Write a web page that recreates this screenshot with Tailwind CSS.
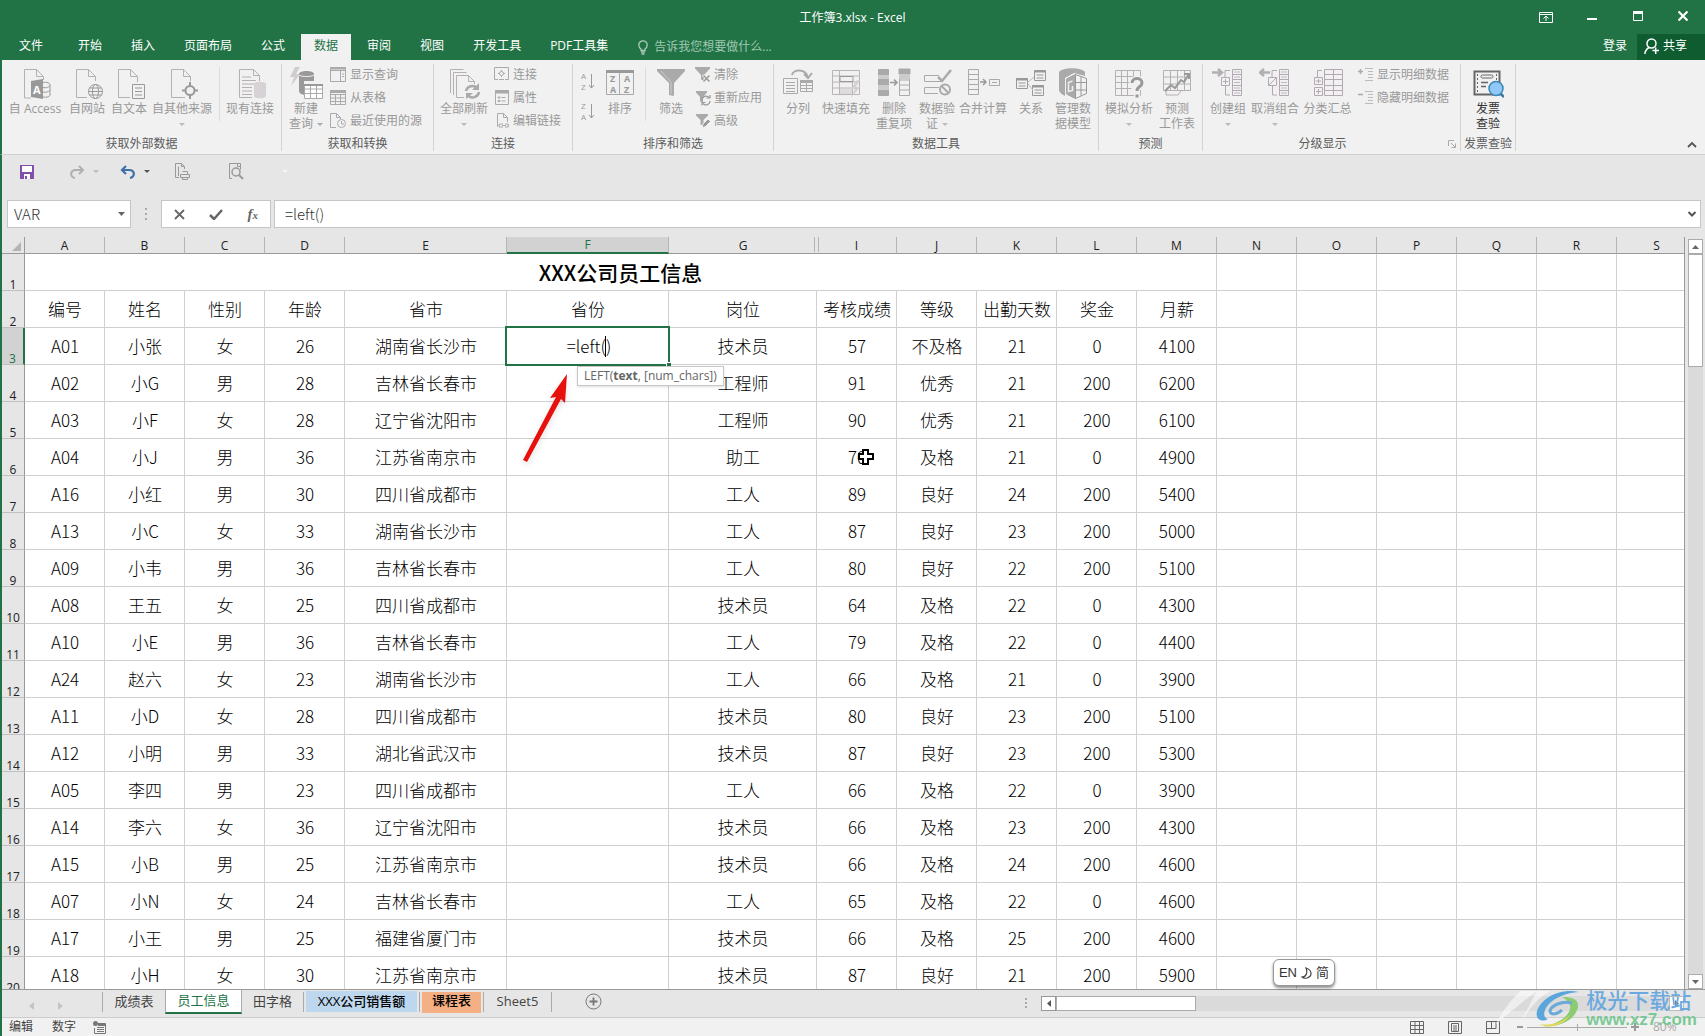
<!DOCTYPE html>
<html lang="zh-CN">
<head>
<meta charset="utf-8">
<title>工作簿3.xlsx - Excel</title>
<script src="https://cdn.jsdelivr.net/npm/@tailwindcss/browser@4"></script>
</head>
<body class="h-screen overflow-hidden bg-[#e6e6e6] font-['Open_Sans','Noto_Sans_CJK_SC',sans-serif] text-xs text-[#444]">
<div class="flex h-full flex-col">

<header class="shrink-0 bg-[#217346] text-white">
  <div class="grid h-[34px] grid-cols-[1fr_auto_1fr] items-center">
    <span></span>
    <h1 class="pt-[2px] text-xs">工作簿3.xlsx - Excel</h1>
    <div class="flex justify-end">
      <button class="flex w-[46px] justify-center" aria-label="功能区显示选项"><svg width="14" height="12" viewBox="0 0 14 12" fill="none" stroke="#fff"><path d="M.5 1.5h13v10H.5zM.5 3.5h13M7 10V5.500M4.500 7.500L7 5l2.500 2.500" /></svg></button>
      <button class="flex w-[46px] items-center justify-center" aria-label="最小化"><svg width="10" height="10"><path d="M0 7h10" stroke="#fff" stroke-width="2"/></svg></button>
      <button class="flex w-[46px] justify-center" aria-label="最大化"><svg width="10" height="10" fill="none" stroke="#fff"><path d="M.5.5h9v9h-9z"/><path d="M0 1.500h10" stroke-width="3"/></svg></button>
      <button class="flex w-[44px] justify-center" aria-label="关闭"><svg width="10" height="10"><path d="M.5.5l9 9M9.500.5l-9 9" stroke="#fff" stroke-width="2.200"/></svg></button>
    </div>
  </div>
  <div class="flex h-[26px] items-stretch justify-between">
    <nav class="flex gap-[3px] pl-[6px]">
      <button class="mr-[6px] px-[13px] pb-[2px]">文件</button>
      <button class="px-[13px] pb-[2px]">开始</button>
      <button class="px-[13px] pb-[2px]">插入</button>
      <button class="px-[13px] pb-[2px]">页面布局</button>
      <button class="px-[13px] pb-[2px]">公式</button>
      <button class="bg-[#f1f1f1] px-[13px] pb-[2px] text-[#217346]">数据</button>
      <button class="px-[13px] pb-[2px]">审阅</button>
      <button class="px-[13px] pb-[2px]">视图</button>
      <button class="px-[13px] pb-[2px]">开发工具</button>
      <button class="px-[13px] pb-[2px]">PDF工具集</button>
      <label class="flex items-center gap-[6px] pl-[14px]">
        <svg width="10" height="15" viewBox="0 0 10 15" fill="none" stroke="#a9cdb9" stroke-width="1.300"><path d="M3 10.500V9C1.500 8 .8 6.500.8 5a4.200 4.200 0 0 1 8.400 0c0 1.500-.7 3-2.200 4v1.500zM3 12.200h4M3.500 14h3"/></svg>
        <input class="w-[140px] bg-transparent placeholder-[#a0c8b2] outline-none" placeholder="告诉我您想要做什么..." aria-label="告诉我您想要做什么">
      </label>
    </nav>
    <div class="flex">
      <button class="px-[10px] pb-[2px]">登录</button>
      <button class="flex w-[68px] items-center gap-1 bg-[#0e5c2f] pb-[2px] pl-[7px]"><svg width="15" height="17" viewBox="0 0 15 17" fill="none" stroke="#fff" stroke-width="1.500"><circle cx="7.500" cy="5.500" r="4.500"/><path d="M5 9.500C2.500 11 1.200 13 .8 16M8.500 12.500h6.500M11.700 9.500v6.500"/></svg>共享</button>
    </div>
  </div>
</header>

<section class="flex h-[95px] shrink-0 border-b border-l-2 border-b-[#cfcfcf] border-l-[#217346] bg-[#f1f1f1] pt-1 pb-[3px] leading-[15px] text-[#999]">
  <!-- 获取外部数据 -->
  <div class="flex w-[280px] shrink-0 flex-col border-r border-[#d2d2d2]">
    <div class="flex h-[72px] pt-[3px]">
      <button class="flex w-[66px] flex-col items-center gap-[2px] whitespace-nowrap"><svg width="32" height="32" viewBox="0 0 32 32" fill="none" stroke="#b4b0b4"><path d="M12 31H5.500V2.500h12l7 7V13M17.500 2.500v7h7"/><path d="M22 16c4-1.500 9-.5 9 1.500v10.500c0 2-5 3-9 1.500M22 20c4 1.500 8 .5 9-1.500M22 24.500c4 1.500 8 .5 9-1.500" stroke="#999"/><path d="M12 14l12-2v20l-12-2z" fill="#999" stroke="none"/><text x="14" y="26.500" font-size="11" font-weight="700" fill="#fff" stroke="none">A</text></svg>自 Access</button>
      <button class="flex w-[38px] flex-col items-center gap-[2px] whitespace-nowrap"><svg width="32" height="32" viewBox="0 0 32 32" fill="none" stroke="#b4b0b4"><path d="M16 30.500H5.500v-28h12l7 7V14M17.500 2.500v7h7"/><g stroke="#999"><circle cx="24.500" cy="24.500" r="7"/><ellipse cx="24.500" cy="24.500" rx="3" ry="7"/><path d="M17.500 24.500h14M18.500 21h12M18.500 28h12"/></g></svg>自网站</button>
      <button class="flex w-[46px] flex-col items-center gap-[2px] whitespace-nowrap"><svg width="32" height="32" viewBox="0 0 32 32" fill="none" stroke="#b4b0b4"><path d="M17 30.500H5.500v-28h12l7 7V15M17.500 2.500v7h7"/><path d="M19.500 17.500h12v14h-12zM22 21h7M22 24.500h7M22 28h7" stroke="#999"/></svg>自文本</button>
      <button class="flex w-[60px] flex-col items-center gap-[2px] whitespace-nowrap"><svg width="32" height="32" viewBox="0 0 32 32" fill="none" stroke="#b4b0b4"><path d="M19 30.500H5.500v-28h12l7 7V14M17.500 2.500v7h7"/><g stroke="#999" stroke-width="2"><circle cx="24" cy="23.500" r="4.500"/><path d="M24 15v4M24 28v4M16 23.500h4M28.500 23.500h3.500"/></g></svg>自其他来源<svg width="6" height="3" class="mt-[5px]"><path d="M0 0h6L3 3z" fill="#bbb"/></svg></button>
      <div class="ml-[7px] h-[54px] w-px shrink-0 bg-[#dcdcdc]"></div>
      <button class="flex w-[60px] flex-col items-center gap-[2px] whitespace-nowrap"><svg width="32" height="32" viewBox="0 0 32 32" fill="none" stroke="#b4b0b4"><path d="M18 30.500H5.500v-28h14l6 6V14M19.500 2.500v6h6M8 10h9M8 13.500h14M8 17h12M8 20.500h10M8 24h10M8 27.500h10"/><path d="M20 17c0-3 12-3 12 0v12c0 3-12 3-12 0z" fill="#d6d2d6" stroke="none"/></svg>现有连接</button>
    </div>
    <h2 class="text-center text-[#5c5c5c]">获取外部数据</h2>
  </div>
  <!-- 获取和转换 -->
  <div class="flex w-[152px] shrink-0 flex-col border-r border-[#d2d2d2]">
    <div class="flex h-[72px] pt-[3px]">
      <button class="flex w-[48px] flex-col items-center gap-[2px]"><svg width="34" height="32" viewBox="0 0 34 32"><path d="M6 0L1 10h4l-3 9L11 7H7l4-7z" fill="#d0ccd0"/><path d="M10 7c0-4 15-4 15 0v7H15v14c-3-1-5-2-5-4z" fill="#999"/><path d="M10 8c2 2 13 2 15 0" stroke="#f1f1f1" fill="none"/><path d="M15.500 17.500h18v14h-18zM15.500 22h18M15.500 26.500h18M21.500 17v14M27.500 17v14" fill="#fff" stroke="#aaa"/><path d="M15 18h19" stroke="#999" stroke-width="2"/></svg><span class="whitespace-nowrap">新建<br>查询<svg width="6" height="3" class="ml-1 inline-block"><path d="M0 0h6L3 3z" fill="#aaa"/></svg></span></button>
      <div class="flex flex-col">
        <button class="flex h-[23px] items-start gap-1 whitespace-nowrap"><svg width="16" height="15" fill="none" stroke="#aaa"><path d="M.5.5h15v14H.5zM.5 3.500h15M10.500 4v10M12 7h2M12 9.500h2"/><path d="M0 1.500h16" stroke-width="2"/></svg>显示查询</button>
        <button class="flex h-[23px] items-start gap-1 whitespace-nowrap"><svg width="16" height="15" fill="none" stroke="#aaa"><path d="M.5.5h15v14H.5zM.5 4.500h15M.5 8h15M.5 11.500h15M5.500 4v11M10.500 4v11"/><path d="M0 1.500h16" stroke-width="3"/></svg>从表格</button>
        <button class="flex h-[23px] items-start gap-1 whitespace-nowrap"><svg width="16" height="15" fill="none" stroke="#aaa"><path d="M6 14.500H.5V.5h6l4 4V6M6.500.5v4h4"/><circle cx="11.500" cy="10.500" r="4"/><path d="M11.500 8v3h2.500"/></svg>最近使用的源</button>
      </div>
    </div>
    <h2 class="text-center text-[#5c5c5c]">获取和转换</h2>
  </div>
  <!-- 连接 -->
  <div class="flex w-[139px] shrink-0 flex-col border-r border-[#d2d2d2]">
    <div class="flex h-[72px] pt-[3px]">
      <button class="flex w-[60px] flex-col items-center gap-[2px] whitespace-nowrap"><svg width="32" height="32" viewBox="0 0 32 32" fill="none" stroke="#b4b0b4"><path d="M2.500 26V2.500h13M5.500 28V5.500h13M16 30.500H8.500v-22h12l6 6V17M20.500 8.500v6h6"/><g stroke="#aaa" stroke-width="2.500"><path d="M18 24a6.500 6.500 0 0 1 11-3M31 25a6.500 6.500 0 0 1-11 3.500"/></g><path d="M31 16v7h-7zM18 32v-6h7z" fill="#aaa" stroke="none"/></svg>全部刷新<svg width="6" height="3" class="mt-[5px]"><path d="M0 0h6L3 3z" fill="#bbb"/></svg></button>
      <div class="flex flex-col">
        <button class="flex h-[23px] items-start gap-1 whitespace-nowrap"><svg width="15" height="15" fill="none" stroke="#aaa"><path d="M4 12.500H.5V.5h14v12H11M5 12.500h5"/><circle cx="7.500" cy="6.500" r="2"/><path d="M7.500 3v1.500M7.500 8.500V10M4 6.500h1.500M9.500 6.500H11"/></svg>连接</button>
        <button class="flex h-[23px] items-start gap-1 whitespace-nowrap"><svg width="15" height="16" fill="none" stroke="#aaa"><path d="M1.500.5h13v14h-13zM7.500 7.500h4M7.500 11h4M4 7h2v1H4zM4 10.500h2v1H4z"/><path d="M1 2h14" stroke-width="3"/></svg>属性</button>
        <button class="flex h-[23px] items-start gap-1 whitespace-nowrap"><svg width="15" height="15" fill="none" stroke="#aaa"><path d="M4 13.500H3.500V.5h6l4 4V9M9.500.5v4h4"/><path d="M9 11H6.500a1.500 1.500 0 0 0 0 3H9M11 11h2a1.500 1.500 0 0 1 0 3h-2M8 12.500h4" stroke-width="1.200"/></svg>编辑链接</button>
      </div>
    </div>
    <h2 class="text-center text-[#5c5c5c]">连接</h2>
  </div>
  <!-- 排序和筛选 -->
  <div class="flex w-[201px] shrink-0 flex-col border-r border-[#d2d2d2]">
    <div class="flex h-[72px] pt-[3px]">
      <div class="flex w-[30px] flex-col items-center gap-[10px] pt-[3px]">
        <button aria-label="升序"><svg class="overflow-visible" width="14" height="20" fill="#999"><text x="0" y="9" font-size="8">A</text><text x="0" y="20" font-size="8">Z</text><path d="M10.500 4v14M8 15l2.500 3 2.500-3" fill="none" stroke="#999"/></svg></button>
        <button aria-label="降序"><svg class="overflow-visible" width="14" height="20" fill="#999"><text x="0" y="9" font-size="8">Z</text><text x="0" y="20" font-size="8">A</text><path d="M10.500 4v14M8 15l2.500 3 2.500-3" fill="none" stroke="#999"/></svg></button>
      </div>
      <button class="flex w-[34px] flex-col items-center gap-[2px]"><svg width="30" height="32" viewBox="0 0 30 32" fill="#999"><path d="M1.500 3.500h27v24h-27zM14.500 4v24" fill="none" stroke="#aaa"/><path d="M1 3h28v3H1z"/><g font-size="9" font-weight="700"><text x="5" y="15">Z</text><text x="5" y="26">A</text><text x="19" y="15">A</text><text x="19" y="26">Z</text></g></svg>排序</button>
      <div class="mr-px ml-[8px] h-[54px] w-px bg-[#dcdcdc]"></div>
      <button class="flex w-[48px] flex-col items-center gap-[2px]"><svg width="30" height="32" viewBox="0 0 30 32"><path d="M1 2h28v2L18 16v13l-5-1V16L1 4z" fill="#aaa"/><path d="M5 4l10 11v12" fill="none" stroke="#ccc"/></svg>筛选</button>
      <div class="flex flex-col">
        <button class="flex h-[23px] items-start gap-[3px] whitespace-nowrap"><svg width="16" height="16"><path d="M0 0h15v1.500L9 8v6l-3-1.500V8L0 1.500z" fill="#aaa"/><path d="M8 8l7 7M15 8l-7 7" stroke="#f1f1f1" stroke-width="3"/><path d="M8.500 8.500l6 6M14.500 8.500l-6 6" stroke="#999" stroke-width="1.500"/></svg>清除</button>
        <button class="flex h-[23px] items-start gap-[3px] whitespace-nowrap"><svg width="16" height="16"><path d="M1 1h11v1.500L8 7v6l-3-1.500V7L1 2.500z" fill="#aaa"/><path d="M7 10a4 4 0 0 1 7-2.500M15 11a4 4 0 0 1-7 2.500M15 5v3h-3.500M7 15.500v-3h3.500" fill="none" stroke="#999" stroke-width="1.200"/></svg>重新应用</button>
        <button class="flex h-[23px] items-start gap-[3px] whitespace-nowrap"><svg width="16" height="16"><path d="M1 1h12v1.500L8.500 7v6l-3-1.500V7L1 2.500z" fill="#aaa"/><path d="M7 15l1-4 5-5 2.500 2.500-5 5z" fill="#999" stroke="#f1f1f1"/></svg>高级</button>
      </div>
    </div>
    <h2 class="text-center text-[#5c5c5c]">排序和筛选</h2>
  </div>
  <!-- 数据工具 -->
  <div class="flex w-[325px] shrink-0 flex-col border-r border-[#d2d2d2]">
    <div class="flex h-[72px] pt-[3px]">
      <button class="flex w-[48px] flex-col items-center gap-[2px]"><svg width="32" height="32" viewBox="0 0 32 32" fill="none" stroke="#aaa"><path d="M1.500 11.500h14v15h-14zM4 15.500h9M4 18.500h9M4 21.500h9M4 24.500h9M18.500 14.500h12v10h-12zM24.500 15v10M19 18.500h11M19 21.500h11"/><path d="M18 14.500h13" stroke-width="3"/><path d="M10 8c1-6 14-7 16 3M22 7l4 4 4-5" stroke-width="2"/></svg>分列</button>
      <button class="flex w-[48px] flex-col items-center gap-[2px] whitespace-nowrap"><svg width="32" height="32" viewBox="0 0 32 32" fill="none" stroke="#b8b4b8"><path d="M2.500 3.500h27v24h-27zM2.500 9h27M2.500 15h27M2.500 21h27M9.500 3v25M22.500 15v12"/><path d="M10 9.500h13v5H10z" fill="#f1f1f1" stroke="#999"/><path d="M10 22h12v5H10z" fill="#ddd" stroke="none"/><path d="M27 13l-6 9h4l-4 9 9-11h-4l4-7z" fill="#d4d0d4" stroke="none"/></svg>快速填充</button>
      <button class="flex w-[48px] flex-col items-center gap-[2px] whitespace-nowrap"><svg width="34" height="32" viewBox="0 0 34 32" fill="none" stroke="#aaa"><path d="M1.500 2.500h10v26h-10z" fill="#aaa"/><path d="M1 8h11v4H1zM1 18h11v5H1z" fill="#ccc" stroke="none"/><path d="M22.500 2.500h10v26h-10zM22.500 13h10M22.500 18h10M22.500 23h10"/><path d="M22 2h11v5H22z" fill="#aaa"/><path d="M22 7h11v5H22z" fill="#ccc" stroke="none"/><path d="M13 15.500h7M17 12.500l3 3-3 3" stroke="#999" stroke-width="1.500"/></svg><span>删除<br>重复项</span></button>
      <button class="flex w-[38px] flex-col items-center gap-[2px] whitespace-nowrap"><svg width="32" height="32" viewBox="0 0 32 32" fill="none" stroke="#aaa"><path d="M18 8.500H3.500v6H22M18 20.500H3.500v6H17"/><path d="M17 10l4 4 9-11" stroke-width="2.500"/><circle cx="24" cy="22.500" r="5" stroke-width="2"/><path d="M20.500 19l7 7" stroke-width="2"/></svg><span>数据验<br>证<svg width="6" height="3" class="ml-1 inline-block"><path d="M0 0h6L3 3z" fill="#bbb"/></svg></span></button>
      <button class="flex w-[54px] flex-col items-center gap-[2px] whitespace-nowrap"><svg width="34" height="32" viewBox="0 0 34 32" fill="none" stroke="#aaa"><path d="M2.500 2.500h10v25h-10zM2.500 7.500h10M2.500 12.500h10M2.500 17.500h10M2.500 22.500h10M23.500 12.500h10v6h-10zM26 15.500h5"/><path d="M14 15h6M17 12l3 3-3 3" stroke="#999" stroke-width="1.500"/></svg>合并计算</button>
      <button class="flex w-[42px] flex-col items-center gap-[2px]"><svg width="32" height="32" viewBox="0 0 32 32" fill="none" stroke="#999"><path d="M1.500 11.500h11v10h-11zM3.500 16h7M3.500 19h7M19.500 3.500h11v10h-11zM21.500 8h7M21.500 11h7M17.500 18.500h11v10h-11zM19.500 23h7M19.500 26h7"/><path d="M1 12.500h12M19 4.500h12M17 19.500h12" stroke-width="2"/><path d="M13 15l6-5M13 17l5 6" stroke="#bbb"/></svg>关系</button>
      <button class="flex w-[42px] flex-col items-center gap-[2px] whitespace-nowrap"><svg width="30" height="32" viewBox="0 0 30 32" fill="none" stroke="#aaa"><path d="M1 5c4-5 22-5 26 0v4l-11-3-9 5v18c-4-2-6-4-6-6z" fill="#aaa" stroke="none"/><path d="M9.500 11.500l8-4v24l-8-4zM17.500 7.500l11 4v15l-11 5M17.500 15.500l11 0M17.500 23h11M23 9.500v19" stroke="#999"/><path d="M8 12l9-4.500v24L8 27z" fill="#aaa" stroke="none"/><path d="M14.500 14l-4 1.500v9l4-1v-4.500" stroke="#eee" stroke-width="1.500"/></svg><span>管理数<br>据模型</span></button>
    </div>
    <h2 class="text-center text-[#5c5c5c]">数据工具</h2>
  </div>
  <!-- 预测 -->
  <div class="flex w-[104px] shrink-0 flex-col border-r border-[#d2d2d2]">
    <div class="flex h-[72px] pt-[3px]">
      <button class="flex w-[60px] flex-col items-center gap-[2px] whitespace-nowrap"><svg width="32" height="32" viewBox="0 0 32 32" fill="none" stroke="#b4b0b4"><path d="M2.500 3.500h25v25h-25zM2.500 9.500h25M2.500 15.500h16M2.500 21.500h16M8.500 3v25M14.500 3v25M20.500 3v9"/><path d="M19 16c0-6 10-6 10 0 0 4-5 3-5 8M24 27v3.500" stroke="#f1f1f1" stroke-width="6"/><path d="M19 16c0-6 10-6 10 0 0 4-5 3-5 8M24 27.500v3" stroke="#999" stroke-width="3"/></svg>模拟分析<svg width="6" height="3" class="mt-[5px]"><path d="M0 0h6L3 3z" fill="#bbb"/></svg></button>
      <button class="flex w-[36px] flex-col items-center gap-[2px] whitespace-nowrap"><svg width="30" height="32" viewBox="0 0 30 32" fill="none" stroke="#b4b0b4"><path d="M1.500 3.500h27v20h-27zM1.500 10h27M1.500 17h27M8.500 3v20M15.500 3v20M22.500 3v20M4 24v4h12l3-4"/><path d="M3 24l6-6 4 3 6-8 3 2 5-8M22 7h5v5" stroke="#999" stroke-width="2"/></svg><span class="text-center">预测<br>工作表</span></button>
    </div>
    <h2 class="text-center text-[#5c5c5c]">预测</h2>
  </div>
  <!-- 分级显示 -->
  <div class="flex w-[258px] shrink-0 flex-col border-r border-[#d2d2d2]">
    <div class="flex h-[72px] pt-[3px]">
      <button class="flex w-[50px] flex-col items-center gap-[2px] whitespace-nowrap"><svg width="32" height="32" viewBox="0 0 32 32" fill="none" stroke="#b4a8b4"><path d="M20.500 2.500h9v26h-9zM20.500 7.500h9M20.500 12.500h9M20.500 18.500h9M20.500 23.500h9M18 3.500h-5V10M13.500 19v9H18M9.500 10.500h8v8h-8zM11 14.500h5M13.500 12v5"/><path d="M22 5h6M22 10h6M22 15.500h6M22 21h6M22 26h6" stroke="#bbb"/><path d="M0 5.500h9M6 2l4 3.500L6 9" stroke="#b0b0b0" stroke-width="2.500"/></svg>创建组<svg width="6" height="3" class="mt-[5px]"><path d="M0 0h6L3 3z" fill="#bbb"/></svg></button>
      <button class="flex w-[44px] flex-col items-center gap-[2px] whitespace-nowrap"><svg width="32" height="32" viewBox="0 0 32 32" fill="none" stroke="#b4a8b4"><path d="M20.500 2.500h9v26h-9zM20.500 7.500h9M20.500 12.500h9M20.500 18.500h9M20.500 23.500h9M18 3.500h-5V10M13.500 19v9H18M9.500 10.500h8v8h-8zM9.500 18.500l8-8"/><path d="M22 5h6M22 10h6M22 15.500h6M22 21h6M22 26h6" stroke="#bbb"/><path d="M2 5.500h9M5 2L1 5.500 5 9" stroke="#b0b0b0" stroke-width="2.500"/></svg>取消组合<svg width="6" height="3" class="mt-[5px]"><path d="M0 0h6L3 3z" fill="#bbb"/></svg></button>
      <button class="flex w-[61px] flex-col items-center gap-[2px] whitespace-nowrap"><svg width="32" height="32" viewBox="0 0 32 32" fill="none" stroke="#b4a8b4"><path d="M12.500 2.500h18v26h-18zM12.500 7.500h18M12.500 12.500h18M12.500 18.500h18M12.500 23.500h18M21.500 2.500v26M10 3.500H5.500V10M2.500 10.500h8v7h-8zM2.500 20.500h8v8h-8zM4 14h5M6.500 12v4M4 24.500h5M6.500 22v5"/></svg>分类汇总</button>
      <div class="flex flex-col">
        <button class="flex h-[23px] items-start gap-[4px] whitespace-nowrap"><svg width="15" height="15" fill="none" stroke="#aaa"><path d="M0 4.500h5M2.500 2v5" stroke-width="1.500"/><path d="M7 1.500h8M10 4.500h5M10 7.500h5M10 10.500h5M7 13.500h8" stroke="#bbb"/></svg>显示明细数据</button>
        <button class="flex h-[23px] items-start gap-[4px] whitespace-nowrap"><svg width="15" height="15" fill="none" stroke="#aaa"><path d="M0 4.500h5" stroke-width="1.500"/><path d="M7 1.500h8M10 4.500h5M10 7.500h5M10 10.500h5M7 13.500h8" stroke="#bbb"/></svg>隐藏明细数据</button>
      </div>
    </div>
    <div class="grid grid-cols-[1fr_auto_1fr] items-center pr-1">
      <span></span><h2 class="pr-[14px] text-center text-[#5c5c5c]">分级显示</h2>
      <button class="justify-self-end" aria-label="分级显示设置"><svg width="8" height="8" fill="none" stroke="#aaa"><path d="M.5 6V.5H6M3 3l4 4M7.500 3.500v4h-4"/></svg></button>
    </div>
  </div>
  <!-- 发票查验 -->
  <div class="flex w-[55px] shrink-0 flex-col border-r border-[#d2d2d2] text-[#333]">
    <div class="flex h-[72px] justify-center pt-[3px]">
      <button class="flex flex-col items-center gap-[2px]"><svg width="32" height="32" viewBox="0 0 32 32" fill="none" stroke="#666"><path d="M2.500 4.500h25v23h-25z" stroke-width="2"/><path d="M5.500 7v18M24.500 7v6" stroke-dasharray="2 2"/><rect x="9" y="8" width="12" height="3" rx="1.500"/><path d="M9 15.500h7M9 19.500h5" stroke-width="1.500"/><path d="M28 26l4 4" stroke="#2f79a8" stroke-width="2.500"/><circle cx="24" cy="21.500" r="7" fill="#90c8f8" stroke="#3c86b4" stroke-width="1.500"/></svg><span>发票<br>查验</span></button>
    </div>
    <h2 class="text-center whitespace-nowrap text-[#5c5c5c]">发票查验</h2>
  </div>
  <button class="mr-[8px] mb-[1px] ml-auto self-end" aria-label="折叠功能区"><svg width="10" height="10"><path d="M1 7l4-4 4 4" fill="none" stroke="#555" stroke-width="1.800"/></svg></button>
</section>

<div class="flex h-[45px] shrink-0 items-center border-l-2 border-l-[#217346] pb-[12px] pl-[18px]">
  <button aria-label="保存"><svg width="14" height="14"><path d="M0 0h14v14H0z" fill="#8250a8"/><path d="M2 1h10v6H2zM4 9h6v5H4z" fill="#fff"/><path d="M5 11h2v3H5z" fill="#8250a8"/></svg></button>
  <button class="ml-[36px] flex items-center gap-[8px]" aria-label="恢复"><svg width="15" height="14" fill="none" stroke="#b0b0b0" stroke-width="2"><path d="M9 1l4 4-4 4M13 5H6C-.5 5 0 12 5 13"/></svg><svg width="6" height="3"><path d="M0 0h6L3 3z" fill="#bbb"/></svg></button>
  <button class="ml-[21px] flex items-center gap-[8px]" aria-label="撤消"><svg width="16" height="14" fill="none" stroke="#3f6fa8" stroke-width="2.200"><path d="M6 1L2 5l4 4M2 5h7c6.500 0 6 7 1 8"/></svg><svg width="6" height="3"><path d="M0 0h6L3 3z" fill="#555"/></svg></button>
  <button class="ml-[24px]" aria-label="快速打印"><svg width="17" height="17" fill="none" stroke="#999"><path d="M5 14.500H1.500V.5h6l3 3V6M7.500.5v3h3M4.500 13V3.500M8.500 8.500h5v3M6.500 11.500h9v3h-9zM8.500 14.500v2h5v-2"/></svg></button>
  <button class="ml-[37px]" aria-label="打印预览"><svg width="16" height="17" fill="none" stroke="#999"><path d="M4 15.500H1.500V.5h11v6M9.500.5v3h3"/><circle cx="8" cy="9" r="4" stroke-width="1.500"/><path d="M11 12l4 4" stroke-width="2"/></svg></button>
  <button class="ml-[38px]" aria-label="自定义快速访问工具栏"><svg width="6" height="3"><path d="M0 0h6L3 3z" fill="#f6f6f6"/></svg></button>
</div>

<div class="flex h-[28px] shrink-0 border-l-2 border-l-[#217346] pr-[4px] pl-[5px] text-sm text-[#555]">
  <div class="flex w-[124px] items-center border border-[#c6c6c6] bg-white pr-[5px] pl-[6px]">
    <input class="min-w-0 flex-1 bg-transparent font-['Noto_Sans_CJK_SC',sans-serif] text-[15px] leading-[20px] font-light text-[#333] outline-none" value="VAR" aria-label="名称框">
    <button aria-label="名称列表"><svg width="7" height="4"><path d="M0 0h7L3.500 4z" fill="#666"/></svg></button>
  </div>
  <svg class="mx-[14px] self-center" width="2" height="12" fill="#aaa"><path d="M0 0h2v2H0zM0 5h2v2H0zM0 10h2v2H0z"/></svg>
  <div class="flex w-[110px] items-center justify-around border border-[#c6c6c6] bg-white">
    <button aria-label="取消"><svg width="11" height="11"><path d="M1 1l9 9M10 1l-9 9" stroke="#666" stroke-width="1.800"/></svg></button>
    <button aria-label="输入"><svg width="14" height="11"><path d="M1 6l4 4 8-9" fill="none" stroke="#666" stroke-width="2.500"/></svg></button>
    <button class="font-['Liberation_Serif',serif] text-[15px] leading-none font-bold text-[#666] italic">f<span class="text-[11px]">x</span></button>
  </div>
  <div class="ml-[3px] flex flex-1 items-center border border-[#c6c6c6] bg-white pr-[3px] pl-[10px]">
    <input class="min-w-0 flex-1 bg-transparent font-['Noto_Sans_CJK_SC',sans-serif] text-[15px] leading-[20px] font-light text-[#333] outline-none" value="=left()" aria-label="编辑栏">
    <button aria-label="展开编辑栏"><svg width="10" height="8"><path d="M1.500 2L5 5.500 8.500 2" fill="none" stroke="#555" stroke-width="2"/></svg></button>
  </div>
</div>

<main class="flex min-h-0 flex-1 border-l-2 border-l-[#217346] pt-[9px]">
  <div class="relative min-w-0 flex-1 overflow-hidden border-r border-[#999]">
    <table class="w-[1695px] table-fixed border-separate border-spacing-0 text-center text-black">
      <colgroup id="cols"></colgroup>
      <thead><tr id="letters" class="h-[16px] bg-[#e6e6e6] text-xs leading-[15px] text-[#222]"></tr></thead>
      <tbody id="rows" class="bg-white font-['Noto_Sans_CJK_SC',sans-serif] text-[17px] leading-[24px] font-light"></tbody>
    </table>
    <div role="tooltip" class="absolute top-[129px] left-[575px] z-10 h-[20px] border border-[#c8c8c8] bg-white px-[6px] text-xs leading-[17px] whitespace-nowrap text-[#666] shadow-sm">LEFT(<b>text</b>, [num_chars])</div>
    <svg class="absolute top-[131px] left-[514px] z-10 drop-shadow-md" width="60" height="100"><path d="M7 92L40 29 34 30 51 6 49 35 45 31 11 94z" fill="#e8100c"/></svg>
    <svg class="absolute top-[211px] left-[855px] z-10" width="18" height="18"><path d="M6 2h5v4h5v5h-5v5H6v-5H2V6h4z" fill="#fff" stroke="#000" stroke-width="2"/></svg>
  </div>
  <div class="flex w-[20px] flex-col pt-[2px] pr-[2px] pl-[3px]">
    <button class="flex h-[15px] shrink-0 items-center justify-center border border-[#ababab] bg-white" aria-label="向上滚动"><svg width="7" height="4"><path d="M0 4h7L3.500 0z" fill="#666"/></svg></button>
    <div class="flex-1 bg-[#dadada]"><div class="h-[113px] border border-[#ababab] bg-white"></div></div>
    <button class="flex h-[15px] shrink-0 items-center justify-center border border-[#ababab] bg-white" aria-label="向下滚动"><svg width="7" height="4"><path d="M0 0h7L3.500 4z" fill="#666"/></svg></button>
  </div>
</main>

<footer class="relative shrink-0 border-l-2 border-l-[#217346]">
  <div class="flex h-[28px] items-start justify-between border-t border-[#999] text-[13px]">
    <div class="flex">
      <button class="mt-[8px] ml-[27px]" aria-label="上一张"><svg width="5" height="8"><path d="M5 0v8L0 4z" fill="#c4c4c4"/></svg></button>
      <button class="mt-[8px] ml-[24px]" aria-label="下一张"><svg width="5" height="8"><path d="M0 0v8l5-4z" fill="#c4c4c4"/></svg></button>
      <nav class="ml-[39px] flex h-[23px] items-center whitespace-nowrap">
        <button class="h-[20px] w-[63px] border-l border-[#aaa]">成绩表</button>
        <button class="h-[24px] w-[77px] border-x border-b-2 border-x-[#aaa] border-b-[#217346] bg-white text-[#217346]">员工信息</button>
        <button class="h-[20px] w-[62px] border-r border-[#aaa]">田字格</button>
        <button class="mx-[2px] h-[21px] w-[111px] bg-[#bdd7ee] font-medium text-black">XXX公司销售额</button>
        <button class="h-[20px] border-l border-[#aaa] pl-[2px]"><span class="block h-[21px] w-[59px] bg-[#f4b084] font-medium text-black">课程表</span></button>
        <button class="ml-[2px] h-[20px] w-[69px] border-x border-[#aaa]">Sheet5</button>
        <button class="ml-[33px]" aria-label="新工作表"><svg width="17" height="17" fill="none" stroke="#777"><circle cx="8.500" cy="8.500" r="7.500"/><path d="M4.500 8.500h8M8.500 4.500v8" stroke-width="1.800"/></svg></button>
      </nav>
    </div>
    <div class="mt-[6px] mr-[21px] flex h-[15px] w-[659px] items-center">
      <svg class="mr-[14px] shrink-0" width="2" height="11" fill="#aaa"><path d="M0 0h2v2H0zM0 4h2v2H0zM0 8h2v2H0z"/></svg>
      <button class="flex h-full w-[15px] shrink-0 items-center justify-center border border-[#999] bg-white" aria-label="向左滚动"><svg width="4" height="7"><path d="M4 0v7L0 3.500z" fill="#555"/></svg></button>
      <div class="h-full flex-1 bg-[#dadada]"><div class="h-full w-[140px] border border-[#ababab] bg-white"></div></div>
      <button class="flex h-full w-[15px] shrink-0 items-center justify-center border border-[#bbb] bg-white" aria-label="向右滚动"><svg width="4" height="7"><path d="M0 0v7l4-3.500z" fill="#777"/></svg></button>
    </div>
  </div>
  <div class="flex h-[19px] items-center border-t border-[#cdcdcd] bg-[#f1f1f1] pr-[26px] pl-[7px]">
    <span>编辑</span><span class="ml-[19px]">数字</span>
    <svg class="ml-[17px]" width="13" height="13" fill="none" stroke="#777"><path d="M5 2.500h7.500v10H1.500V7M4 6.500h7M4 8.500h7M4 10.500h7"/><path d="M5 4h8" stroke-width="2"/><circle cx="2.500" cy="2.500" r="2.500" fill="#777" stroke="none"/></svg>
    <div class="ml-auto flex items-center text-[#888]">
      <button aria-label="普通"><svg width="14" height="13" fill="none" stroke="#666"><path d="M.5.5h13v12H.5zM.5 4.500h13M.5 8.500h13M5 .5v12M9.500.5v12"/></svg></button>
      <button class="ml-[24px]" aria-label="页面布局"><svg width="14" height="13" fill="none" stroke="#666"><path d="M.5.5h13v12H.5zM3.500 2.500h7v8h-7zM5 5h4M5 7h4M5 9h4"/></svg></button>
      <button class="ml-[24px]" aria-label="分页预览"><svg width="14" height="13" fill="none" stroke="#666"><path d="M.5.5h13v12H.5zM.5 7.500h9.500V.5M5.500.5v7"/></svg></button>
      <button class="ml-[17px]" aria-label="缩小"><svg width="6" height="8"><path d="M0 4h6" stroke="#999" stroke-width="2"/></svg></button>
      <svg class="mx-[4px]" width="100" height="8" stroke="#aaa"><path d="M0 4.500h100M50.500 1v7"/></svg>
      <button aria-label="放大"><svg width="8" height="8"><path d="M0 4h8M4 0v8" stroke="#999" stroke-width="2"/></svg></button>
      <span class="ml-[14px] w-[26px] text-[#aaa]">80%</span>
    </div>
  </div>
  <!-- 右下角站点标识 -->
  <div class="absolute right-[8px] bottom-[7px] flex items-end">
    <svg class="mr-[1px]" width="90" height="40" viewBox="0 0 90 40">
      <path d="M0 36C8 22 16 10 26 2h16C28 12 14 24 0 36zM26 32C34 22 40 10 56 2H42z" fill="#fff" opacity=".55"/>
      <path d="M84 3C66-1 47 8 42 22c-2 8 4 12 11 8-5-1-5-8 0-14C60 8 71 4 84 3z" fill="#5aa6dc"/>
      <path d="M67 8c8 0 17 1 16 10-2 11-16 21-35 19 12-1 25-8 27-17 1-6-3-9-8-12z" fill="#8ccb72"/>
      <path d="M44 35c10 2 23-1 31-9-5 9-20 15-31 9z" fill="#e3d85c"/>
      <path d="M77 14c-10-3-21 3-22 8 0 4 7 4 12-1" fill="none" stroke="#6aa9da" stroke-width="3"/>
    </svg>
    <div class="flex flex-col whitespace-nowrap">
      <span class="font-['Noto_Sans_CJK_SC',sans-serif] text-[21px] leading-[22px] font-medium text-[#6aa9e0]">极光下载站</span>
      <span class="font-['Liberation_Sans',sans-serif] text-[17px] leading-[19px] font-bold text-[#6cc48c]/90">www.xz7.com</span>
    </div>
  </div>
</footer>
</div>

<!-- 输入法状态 -->
<div class="absolute right-[370px] bottom-[50px] flex h-[27px] items-center gap-[4px] rounded-md border border-[#999] bg-white px-[5px] font-['Liberation_Sans','Noto_Sans_CJK_SC',sans-serif] text-[13px] text-[#333] shadow-[0_2px_3px_rgba(0,0,0,0.45)]">EN<svg width="11" height="12" fill="none" stroke="#444" stroke-width="1.200"><path d="M5 1c6 2 7 8 1 10-2 .5-4 0-5-1 4 0 6-4 4-9z"/></svg>简</div>

<script>
const letters = ['A','B','C','D','E','F','G','I','J','K','L','M','N','O','P','Q','R','S'];
const widths = { E: 162, F: 162, G: 148 };
const data = [
  '编号,姓名,性别,年龄,省市,省份,岗位,考核成绩,等级,出勤天数,奖金,月薪',
  'A01,小张,女,26,湖南省长沙市,=left(),技术员,57,不及格,21,0,4100',
  'A02,小G,男,28,吉林省长春市,,工程师,91,优秀,21,200,6200',
  'A03,小F,女,28,辽宁省沈阳市,,工程师,90,优秀,21,200,6100',
  'A04,小J,男,36,江苏省南京市,,助工,70,及格,21,0,4900',
  'A16,小红,男,30,四川省成都市,,工人,89,良好,24,200,5400',
  'A13,小C,女,33,湖南省长沙市,,工人,87,良好,23,200,5000',
  'A09,小韦,男,36,吉林省长春市,,工人,80,良好,22,200,5100',
  'A08,王五,女,25,四川省成都市,,技术员,64,及格,22,0,4300',
  'A10,小E,男,36,吉林省长春市,,工人,79,及格,22,0,4400',
  'A24,赵六,女,23,湖南省长沙市,,工人,66,及格,21,0,3900',
  'A11,小D,女,28,四川省成都市,,技术员,80,良好,23,200,5100',
  'A12,小明,男,33,湖北省武汉市,,技术员,87,良好,23,200,5300',
  'A05,李四,男,23,四川省成都市,,工人,66,及格,22,0,3900',
  'A14,李六,女,36,辽宁省沈阳市,,技术员,66,及格,23,200,4300',
  'A15,小B,男,25,江苏省南京市,,技术员,66,及格,24,200,4600',
  'A07,小N,女,24,吉林省长春市,,工人,65,及格,22,0,4600',
  'A17,小王,男,25,福建省厦门市,,技术员,66,及格,25,200,4600',
  'A18,小H,女,30,江苏省南京市,,技术员,87,良好,21,200,5900'
];
document.getElementById('cols').innerHTML = '<col style="width:23px">' +
  letters.map(l => `<col style="width:${widths[l] || 80}px">`).join('');
const headClass = {
  F: 'border-b-2 border-r border-b-[#217346] border-r-[#b5b5b5] bg-[#d2d2d2] font-normal text-[#217346]',
  G: 'relative border-b border-[#999] font-normal'
};
document.getElementById('letters').innerHTML =
  '<th class="border-r border-b border-[#999] p-0"><svg class="mt-[3px] mr-[3px] ml-auto" width="9" height="9"><path d="M9 0v9H0z" fill="#b4b4b4"/></svg></th>' +
  letters.map(l => `<th scope="col" class="${headClass[l] || 'border-b border-r border-b-[#999] border-r-[#b5b5b5] font-normal'}">${l}${l === 'G' ? '<span class="absolute top-0 -right-[2px] h-[15px] w-[5px] border-x border-[#b5b5b5]"></span>' : ''}</th>`).join('');

const rowHead = n => n === 3
  ? '<th scope="row" class="border-b border-r-2 border-b-[#c0c0c0] border-r-[#217346] bg-[#d2d2d2] p-0 align-bottom font-[\'Open_Sans\'] text-xs leading-[10px] font-normal text-[#217346]">3</th>'
  : `<th scope="row" class="border-b border-r border-b-[#c0c0c0] border-r-[#999] bg-[#e6e6e6] p-0 align-bottom font-['Open_Sans'] text-xs leading-[10px] font-normal text-[#222]">${n}</th>`;
const cell = v => `<td class="border-b border-r border-[#d0d0d0] p-0 pl-px whitespace-nowrap">${v}</td>`;
const active = '<td class="relative border-b border-r border-[#d0d0d0] p-0 pl-[3px]"><span class="absolute -top-[2px] -right-[2px] -bottom-[2px] -left-[2px] border-2 border-[#217346]"></span><span class="absolute -right-[3px] -bottom-[3px] h-[5px] w-[5px] border-t border-l border-white bg-[#217346]"></span>=left(<span class="absolute top-[8px] ml-[-1px] h-[21px] w-px bg-black"></span>)</td>';
let html = `<tr class="h-[37px]">${rowHead(1)}<td colspan="12" class="border-b border-r border-[#d0d0d0] p-0 text-[21px] font-medium">XXX公司员工信息</td>${cell('').repeat(6)}</tr>`;
data.forEach((line, i) => {
  const values = line.split(',');
  html += `<tr class="h-[37px]">${rowHead(i + 2)}${values.map(v => v === '=left()' ? active : cell(v)).join('')}${cell('').repeat(6)}</tr>`;
});
document.getElementById('rows').innerHTML = html;
</script>
</body>
</html>
